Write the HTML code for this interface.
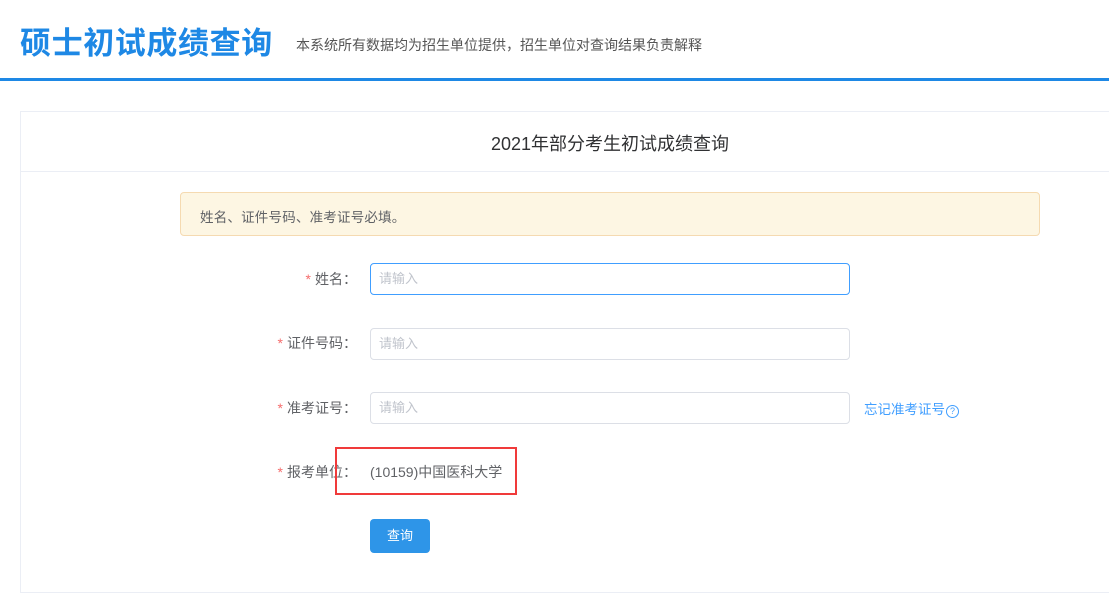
<!DOCTYPE html>
<html><head><meta charset="utf-8"><style>
body{margin:0;width:1109px;height:577px;overflow:hidden;background:#fff;font-family:"Liberation Sans","Noto Sans CJK SC",sans-serif;position:relative;color:#606266}
.a{position:absolute;white-space:nowrap}
.inp{position:absolute;left:370px;border:1px solid #dcdfe6;border-radius:4px;font-size:13px;color:#c0c4cc;line-height:30px;padding-left:8px;box-sizing:border-box;width:480px;height:32px}
.lb{position:absolute;font-size:14px;color:#606266;text-align:right;right:752px}
.lb i{color:#f56c6c;font-style:normal;margin-right:4px}
</style></head><body>
<div class="a" style="left:20px;top:18px;font-size:31px;font-weight:bold;color:#1e88e5;letter-spacing:0.6px">硕士初试成绩查询</div>
<div class="a" style="left:296px;top:35px;font-size:14px;color:#555">本系统所有数据均为招生单位提供，招生单位对查询结果负责解释</div>
<div class="a" style="left:0;top:78px;width:1109px;height:3px;background:#1e88e5"></div>
<div class="a" style="left:20px;top:111px;width:1100px;height:480px;border:1px solid #ebeef5"></div>
<div class="a" style="left:21px;top:171px;width:1100px;height:1px;background:#ebeef5"></div>
<div class="a" style="left:491px;top:130px;font-size:18px;color:#303133">2021年部分考生初试成绩查询</div>
<div class="a" style="left:180px;top:192px;width:858px;height:42px;background:#fdf6e3;border:1px solid #f5dab1;border-radius:4px"></div>
<div class="a" style="left:200px;top:206px;font-size:13.5px;letter-spacing:0.2px;color:#606266">姓名、证件号码、准考证号必填。</div>
<div class="lb" style="top:269px"><i>*</i>姓名：</div>
<div class="inp" style="top:263px;border-color:#409eff">请输入</div>
<div class="lb" style="top:333px"><i>*</i>证件号码：</div>
<div class="inp" style="top:328px">请输入</div>
<div class="lb" style="top:398px"><i>*</i>准考证号：</div>
<div class="inp" style="top:392px">请输入</div>
<div class="a" style="left:864px;top:398px;font-size:13.5px;color:#409eff">忘记准考证号<span style="display:inline-block;width:11px;height:11px;border:1px solid #409eff;border-radius:50%;font-size:9px;line-height:11px;text-align:center;margin-left:1px">?</span></div>
<div class="lb" style="top:462px"><i>*</i>报考单位：</div>
<div class="a" style="left:370px;top:462px;font-size:14px;color:#606266">(10159)中国医科大学</div>
<div class="a" style="left:335px;top:447px;width:178px;height:44px;border:2px solid #f03a3a"></div>
<div class="a" style="left:370px;top:519px;width:60px;height:34px;background:#2e95e8;border-radius:4px;color:#fff;font-size:13px;text-align:center;line-height:34px">查询</div>
</body></html>
